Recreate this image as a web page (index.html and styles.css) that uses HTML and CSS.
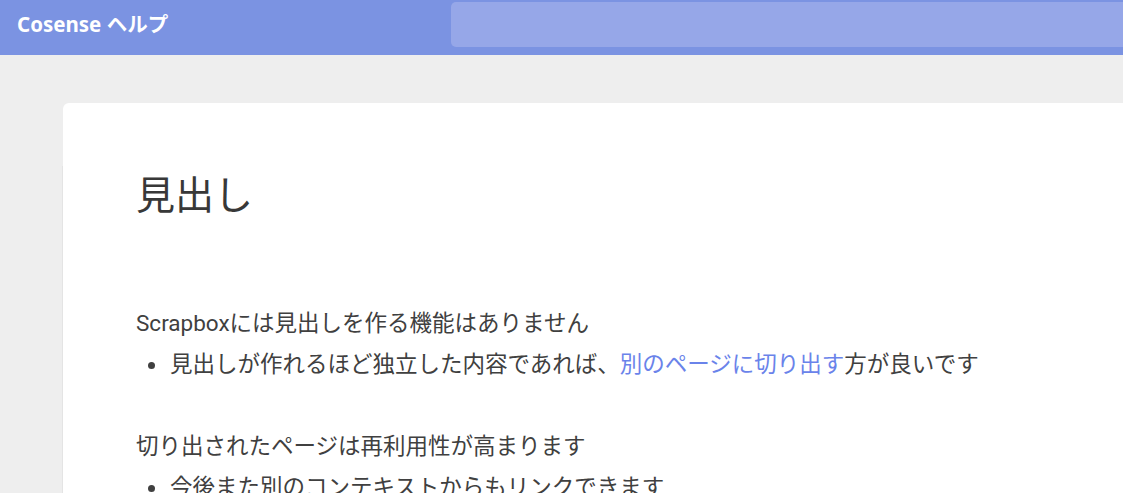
FILE: index.html
```html
<!DOCTYPE html>
<html>

<head>
    <meta charset="utf-8">
    <title>見出し - Cosense ヘルプ</title>
    <link rel="stylesheet" href="styles.css">
</head>

<body>
    <header class="navbar">
        <div class="brand">Cosense ヘルプ</div>
        <div class="search"></div>
    </header>
    <main class="page-wrap">
        <article class="page">
            <div class="page-head"></div>
            <div class="lines">
                <h1 class="title">見出し</h1>
                <div class="spacer"></div>
                <div class="line">Scrapboxには見出しを作る機能はありません</div>
                <div class="line item">見出しが作れるほど独立した内容であれば、<a class="page-link" href="#">別のページに切り出す</a>方が良いです</div>
                <div class="line"></div>
                <div class="line">切り出されたページは再利用性が高まります</div>
                <div class="line item">今後また別のコンテキストからもリンクできます</div>
            </div>
        </article>
    </main>
</body>

</html>
```

FILE: styles.css
```css
html,
body {
    margin: 0;
    height: 100%;
    overflow: hidden;
}

body {
    background-color: #eeeeee;
    font-family: Roboto, "Noto Sans CJK JP", sans-serif;
    color: #404040;
}

.navbar {
    display: grid;
    grid-template-columns: 451px 1fr;
    height: 55px;
    background-color: #7b93e2;
}

.brand {
    padding-left: 17px;
    line-height: 49px;
    color: #fff;
    font-family: "Noto Sans", "Noto Sans CJK JP", sans-serif;
    font-weight: bold;
    font-size: 20.5px;
}

.search {
    margin: 2px 0 8px 0;
    background-color: #96a7e8;
    border-radius: 5px 0 0 5px;
}

.page-wrap {
    padding: 48px 0 0 63px;
}

.page {
    width: 1100px;
    background-color: #fff;
    border-radius: 6px 0 0 0;
}

.page-head {
    height: 63px;
}

.lines {
    padding-left: 73px;
    box-shadow: -1px 0 0 #e4e4e4;
    min-height: 400px;
}

.title {
    margin: 0;
    height: 61px;
    line-height: 61px;
    font-size: 39px;
    font-weight: normal;
    color: #383838;
}

.spacer {
    height: 76px;
}

.line {
    height: 41px;
    line-height: 41px;
    font-size: 22.5px;
    white-space: nowrap;
}

.item {
    position: relative;
    padding-left: 34px;
}

.item::before {
    content: "";
    position: absolute;
    left: 12px;
    top: 18px;
    width: 7px;
    height: 7px;
    border-radius: 50%;
    background-color: #404040;
}

.page-link {
    color: #6a83ea;
    text-decoration: none;
}
```
